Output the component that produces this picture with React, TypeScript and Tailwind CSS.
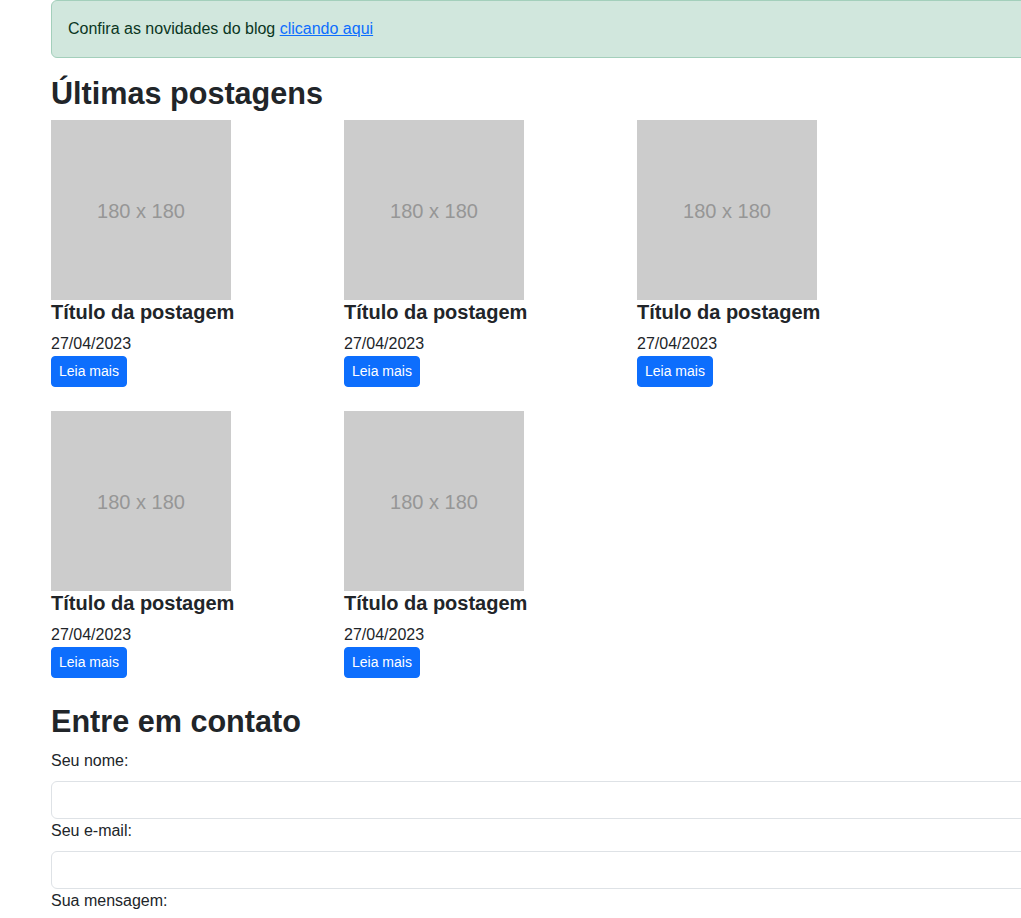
import React from 'react'

const posts = [1, 2, 3, 4, 5]

function Placeholder() {
  return (
    <div className="flex h-[180px] w-[180px] items-center justify-center bg-[#cccccc] pt-[2px] text-[20px] text-[#969696]">
      180 x 180
    </div>
  )
}

function PostCard() {
  return (
    <div className="mb-6 w-[293px]">
      <Placeholder />
      <h5 className="mb-2 text-[20px] font-bold leading-[24px] text-[#212529]">
        Título da postagem
      </h5>
      <p className="text-[16px] leading-[24px] text-[#212529]">27/04/2023</p>
      <button className="rounded-[4px] border border-[#0d6efd] bg-[#0d6efd] px-[7px] py-1 text-[14px] leading-[21px] text-white">
        Leia mais
      </button>
    </div>
  )
}

export default function App() {
  return (
    <div
      className="w-[1021px] overflow-hidden bg-white text-[#212529]"
      style={{ fontFamily: '"Liberation Sans", Arial, sans-serif' }}
    >
      <div className="ml-[51px] w-[1200px]">
        {/* aviso do blog */}
        <div className="mb-4 rounded-[6px] border border-[#a3cfbb] bg-[#d1e7dd] p-4 text-[16px] leading-[24px] text-[#0a3622]">
          Confira as novidades do blog{' '}
          <a href="#" className="text-[#0d6efd] underline">
            clicando aqui
          </a>
        </div>

        <h2 className="mb-2 text-[30.6px] font-bold leading-[38px]">Últimas postagens</h2>
        <div className="flex w-[879px] flex-wrap">
          {posts.map((p) => (
            <PostCard key={p} />
          ))}
        </div>

        <h2 className="mb-[9px] text-[30.6px] font-bold leading-[38px]">Entre em contato</h2>
        <form>
          <label className="mb-2 block text-[16px] leading-[24px]">Seu nome:</label>
          <input
            type="text"
            className="block h-[38px] w-full rounded-[6px] border border-[#dee2e6] px-3"
          />
          <label className="mb-2 block text-[16px] leading-[24px]">Seu e-mail:</label>
          <input
            type="email"
            className="block h-[38px] w-full rounded-[6px] border border-[#dee2e6] px-3"
          />
          <label className="mb-2 block text-[16px] leading-[24px]">Sua mensagem:</label>
          <textarea className="block h-[100px] w-full rounded-[6px] border border-[#dee2e6] px-3" />
        </form>
      </div>
    </div>
  )
}
